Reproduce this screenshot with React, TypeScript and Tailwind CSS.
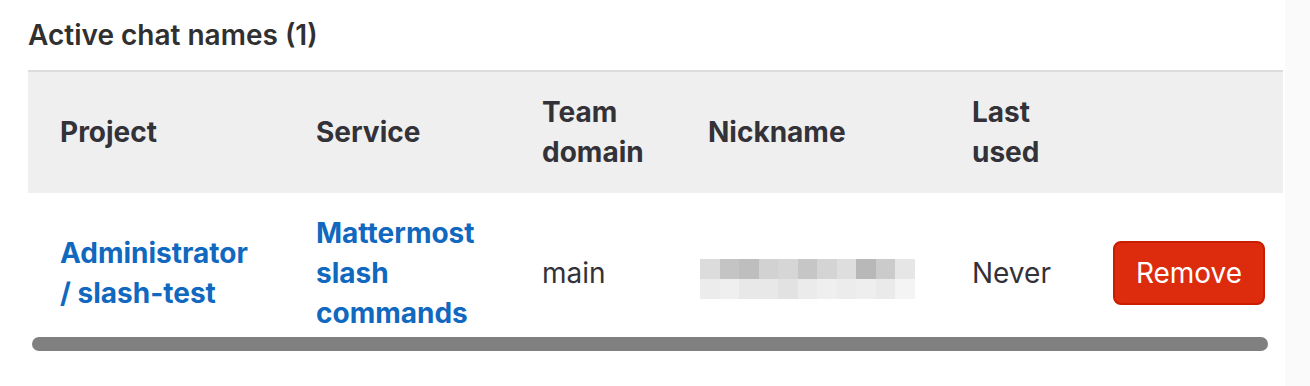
import React from 'react';

const topRow = ['#dcdcdc', '#c4c4c4', '#bebebe', '#d2d2d2', '#d6d6d6', '#c6c6c6', '#d4d4d4', '#dedede', '#b8b8b8', '#cbcbcb', '#e6e6e6'];
const bottomRow = ['#ececec', '#efefef', '#e8e8e8', '#e8e8e8', '#e2e2e2', '#ebebeb', '#efefef', '#ececec', '#eeeeee', '#eaeaea', '#f4f4f4'];

function Blurred() {
	// pixelated nickname
	return (
		<div className="mt-[12px] -ml-[8px] flex flex-col w-[215px]">
			<div className="flex h-[20px]">
				{topRow.map((c, i) => (
					<div key={i} className="h-full flex-1" style={{ background: c }} />
				))}
			</div>
			<div className="flex h-[20px]">
				{bottomRow.map((c, i) => (
					<div key={i} className="h-full flex-1" style={{ background: c }} />
				))}
			</div>
		</div>
	);
}

export default function App() {
	const th = 'pl-8 pr-4 pt-[20px] pb-[21px] text-left align-middle font-bold';
	const td = 'pl-8 pr-4 pt-[20px] pb-[22px] align-middle';

	return (
		<div className="flex h-[386px] bg-white text-[#333238]" style={{ fontFamily: 'Inter, "Noto Sans", sans-serif' }}>
			<div className="w-[1285px] pl-[28px] pr-[2px] pt-[17px]">
				<h2 className="text-[28px] leading-[36px] font-semibold text-[#303030] mb-[17px]">Active chat names (1)</h2>

				<div className="relative">
					<table className="w-[1255px] table-fixed border-collapse text-[28px] leading-[40px]">
						<colgroup>
							<col className="w-[256px]" />
							<col className="w-[226px]" />
							<col className="w-[166px]" />
							<col className="w-[264px]" />
							<col className="w-[141px]" />
							<col className="w-[202px]" />
						</colgroup>
						<thead>
							<tr className="bg-[#efefef] border-t-2 border-[#dcdcdc]">
								<th className={th}>Project</th>
								<th className={th}>Service</th>
								<th className={th}>Team domain</th>
								<th className={th}>Nickname</th>
								<th className={th}>Last used</th>
								<th className={th}></th>
							</tr>
						</thead>
						<tbody>
							<tr>
								<td className="pl-8 pr-7 pt-[20px] pb-[22px] align-middle">
									<a href="#" className="font-bold text-[#1068bf]">Administrator / slash-test</a>
								</td>
								<td className={td}>
									<a href="#" className="font-bold text-[#1068bf]">Mattermost slash commands</a>
								</td>
								<td className={td}>main</td>
								<td className={td}>
									<Blurred />
								</td>
								<td className={td}>Never</td>
								<td className={td}>
									<button className="h-[64px] w-[152px] rounded-lg border-2 border-[#c91c00] bg-[#dd2b0e] text-white text-[28px] leading-[40px]">
										Remove
									</button>
								</td>
							</tr>
						</tbody>
					</table>

					{/* overlay scrollbar */}
					<div className="absolute left-[4px] top-[267px] h-[14px] w-[1236px] rounded-full bg-[#808080]" />
				</div>
			</div>
			<div className="flex-1 bg-[#fafafa]" />
		</div>
	);
}
